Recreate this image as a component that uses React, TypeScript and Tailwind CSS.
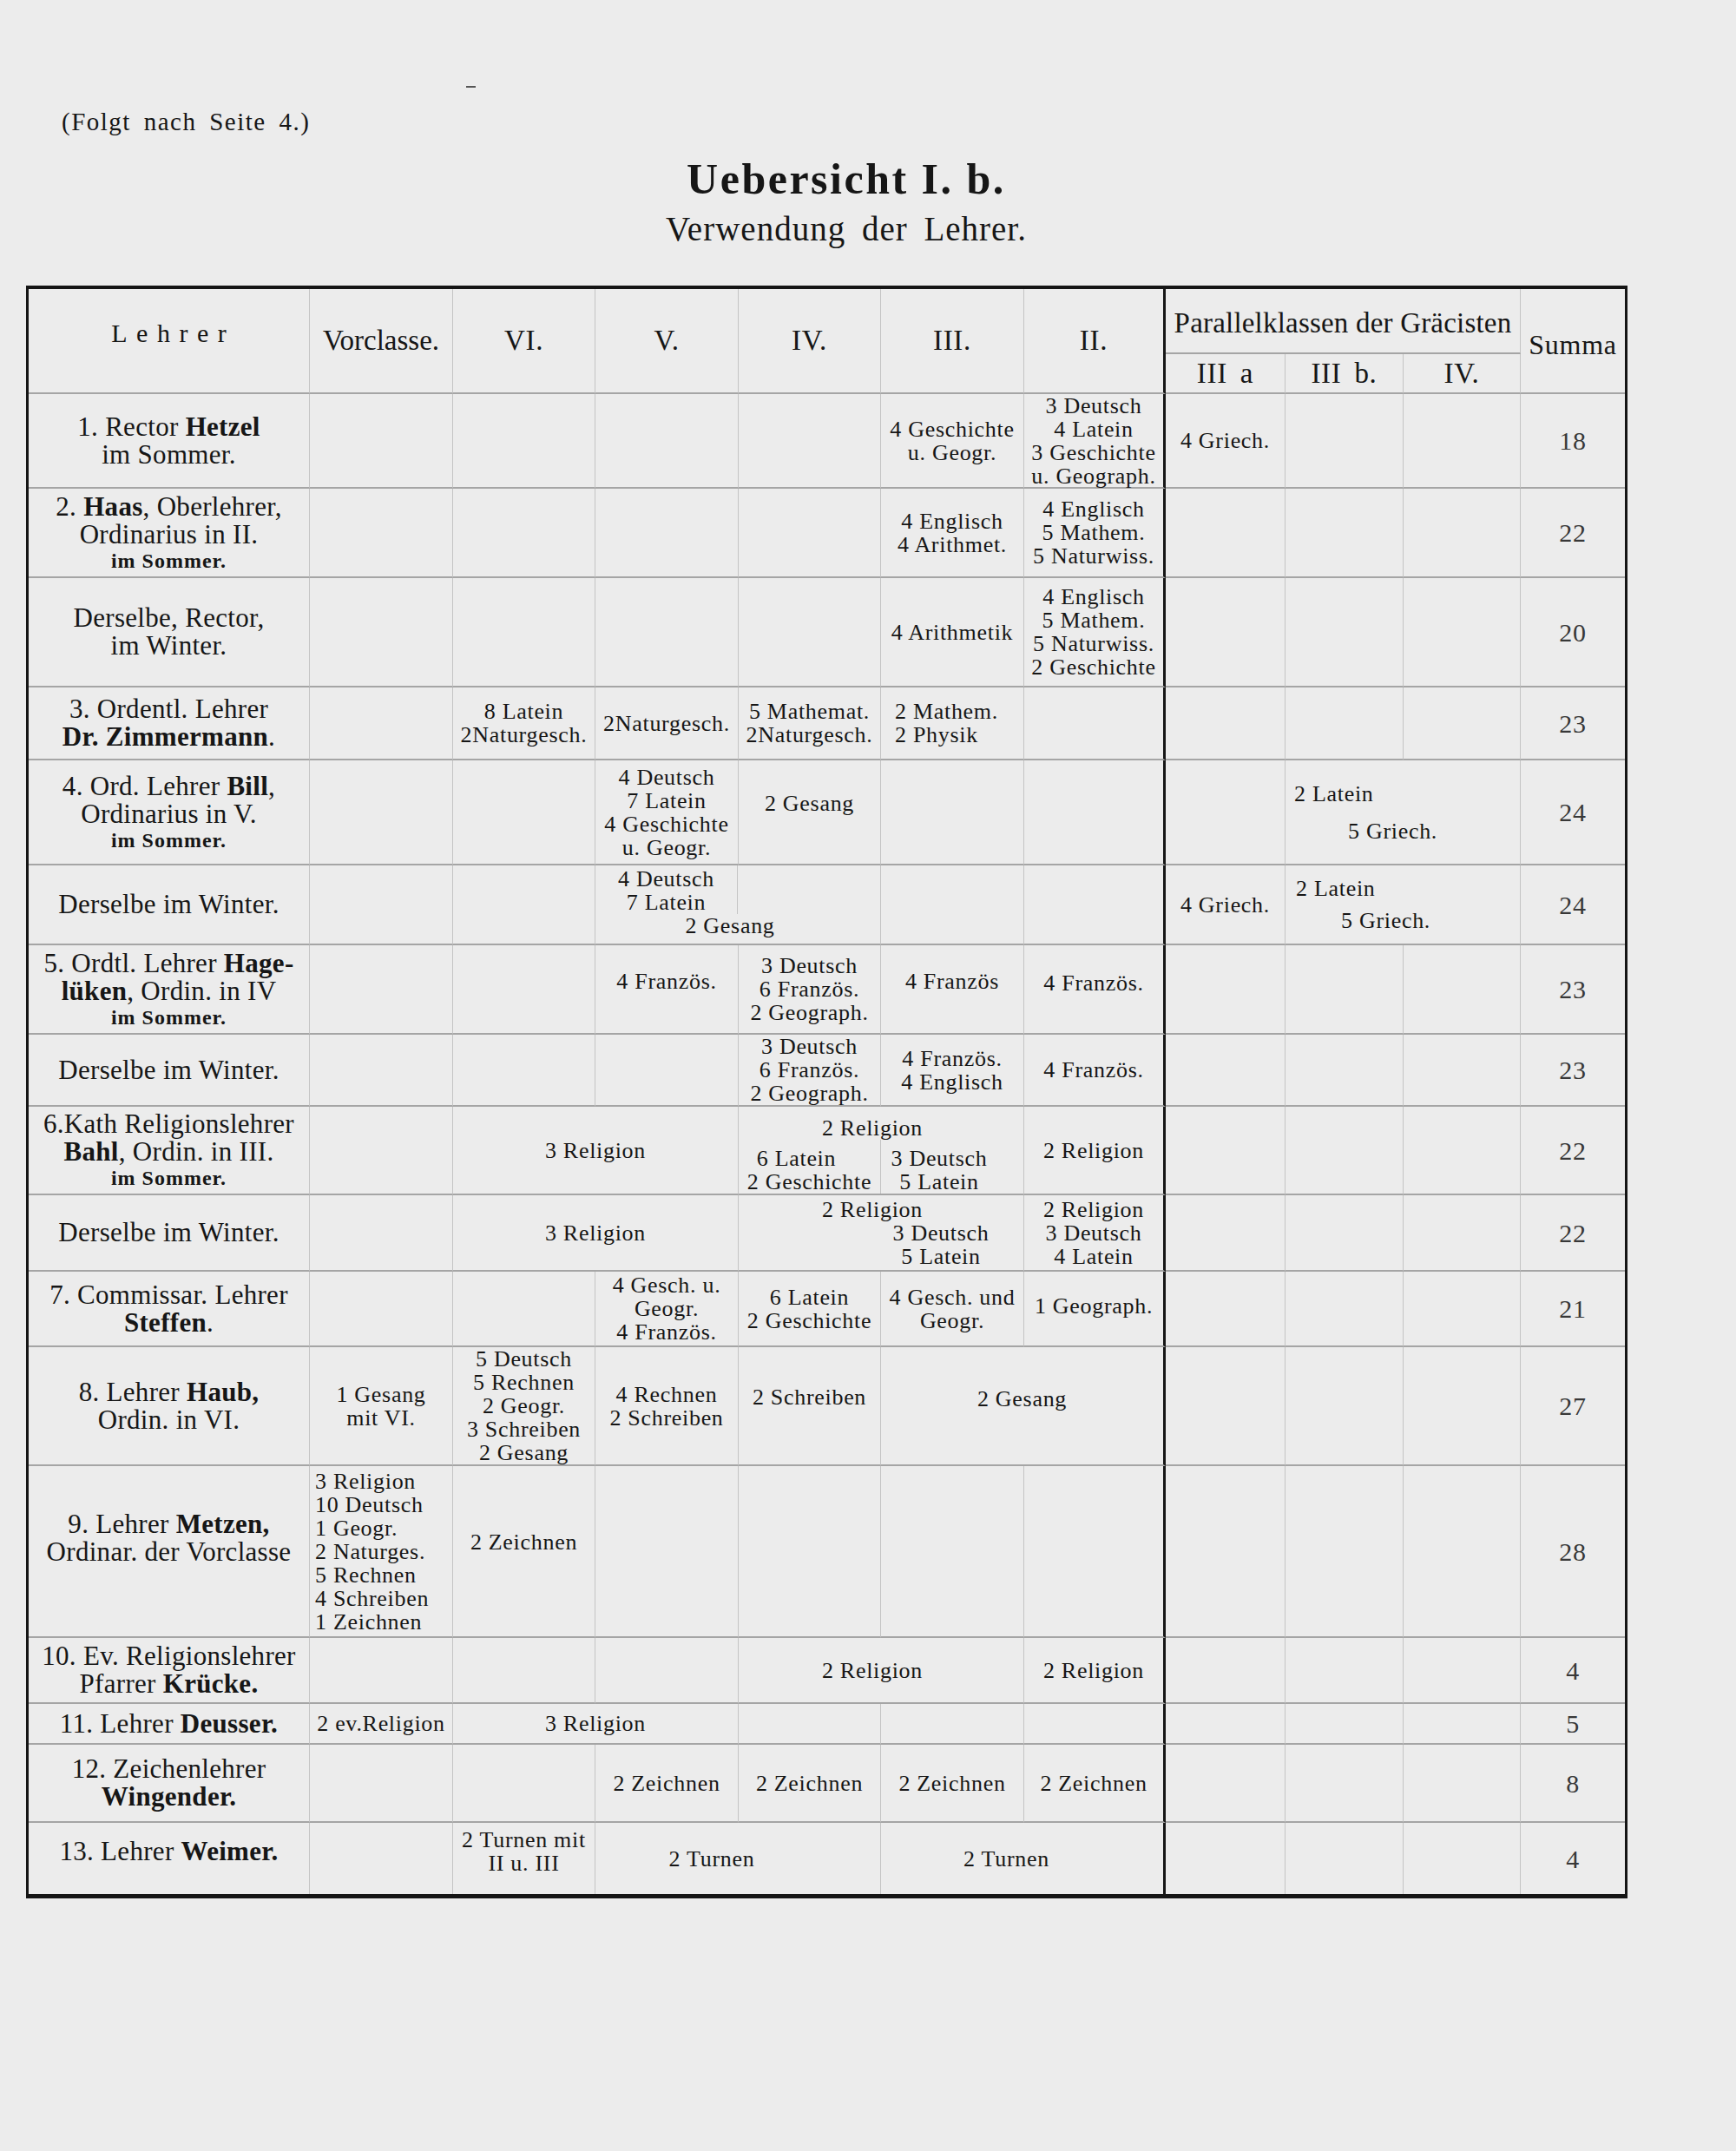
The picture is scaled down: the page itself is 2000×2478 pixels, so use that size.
import React from 'react';

const SPAN: Record<number, string> = { 1: '', 2: 'col-span-2', 3: 'col-span-3' };

type CP = {
  span?: number;
  rs?: boolean;
  right?: 'thin' | 'thick' | 'none';
  last?: boolean;
  className?: string;
  lines?: string[];
  children?: React.ReactNode;
};

function C({ span = 1, rs = false, right = 'thin', last = false, className = '', lines, children }: CP) {
  const r =
    right === 'thick'
      ? 'border-r-[3px] border-r-[#161616]'
      : right === 'none'
      ? ''
      : 'border-r border-r-[#c4c4c4]';
  const b = last ? '' : 'border-b-2 border-b-[#a5a5a5]';
  return (
    <div
      className={`${SPAN[span]} ${rs ? 'row-span-2' : ''} ${r} ${b} flex flex-col items-center justify-center text-center min-w-0 ${className}`}
    >
      {lines
        ? lines.map((s, i) => (
            <div key={i} className="whitespace-nowrap">
              {s}
            </div>
          ))
        : children}
    </div>
  );
}

function L({ children, last = false }: { children: React.ReactNode; last?: boolean }) {
  return (
    <C last={last} className="text-[31px] leading-[32px] px-[2px] tracking-[0.3px]">
      {children}
    </C>
  );
}

function Small({ children }: { children: React.ReactNode }) {
  return <div className="text-[24px] leading-[28px] font-bold tracking-[1px] whitespace-nowrap">{children}</div>;
}

function Ln({ children, className = '' }: { children: React.ReactNode; className?: string }) {
  return <div className={`whitespace-nowrap ${className}`}>{children}</div>;
}

function S({ v, last = false }: { v: string; last?: boolean }) {
  return (
    <C right="none" last={last} className="text-[30px] text-[#383838]">
      {v}
    </C>
  );
}

function E({ n = 1, thick = false, last = false }: { n?: number; thick?: boolean; last?: boolean }) {
  const arr = Array.from({ length: n });
  return (
    <>
      {arr.map((_, i) => (
        <C key={i} right={thick && i === n - 1 ? 'thick' : 'thin'} last={last} />
      ))}
    </>
  );
}

export default function App() {
  return (
    <div className="w-[2000px] h-[2478px] bg-[#ececec] text-[#161616] font-['Liberation_Serif',serif] overflow-hidden">
      <div className="ml-[537px] pt-[99px]">
        <div className="w-[11px] h-[2px] bg-[#555]" />
      </div>
      <div className="mt-[25px] ml-[71px] text-[29px] leading-[29px] tracking-[1.5px] [word-spacing:6px] whitespace-nowrap">
        (Folgt nach Seite 4.)
      </div>
      <div className="mt-[26px] pr-[50px] text-center text-[50px] leading-[50px] font-bold tracking-[2.5px]">
        Uebersicht I. b.
      </div>
      <div className="mt-[13px] pr-[50px] text-center text-[39px] leading-[39px] tracking-[1px] [word-spacing:8px]">
        Verwendung der Lehrer.
      </div>

      <div className="mt-[46px] ml-[30px] w-[1845px] border-t-4 border-l-[3px] border-r-[3px] border-b-[5px] border-[#151515]">
        <div className="grid grid-cols-[324px_165px_164px_165px_164px_165px_163px_138px_136px_135px_120px] grid-rows-[75px_46px_109px_103px_126px_84px_121px_92px_103px_83px_102px_88px_87px_137px_198px_76px_47px_90px_82px] text-[26px] leading-[27px] tracking-[0.7px]">
          {/* Header */}
          <C rs className="text-[30px] leading-[30px] pb-[18px] tracking-[0.35em] pl-[0.35em]">
            Lehrer
          </C>
          <C rs className="text-[33px] leading-[33px] tracking-[0px]">Vorclasse.</C>
          <C rs className="text-[33px] leading-[33px]">VI.</C>
          <C rs className="text-[33px] leading-[33px]">V.</C>
          <C rs className="text-[33px] leading-[33px]">IV.</C>
          <C rs className="text-[33px] leading-[33px]">III.</C>
          <C rs right="thick" className="text-[33px] leading-[33px]">II.</C>
          <C span={3} className="text-[33px] leading-[33px] tracking-[0.2px] pt-[6px]">
            <Ln>Parallelklassen der Gräcisten</Ln>
          </C>
          <C rs right="none" className="text-[32px] leading-[32px] pt-[8px]">Summa</C>
          <C className="text-[33px] leading-[33px] [word-spacing:6px]">III a</C>
          <C className="text-[33px] leading-[33px] [word-spacing:6px]">III b.</C>
          <C className="text-[33px] leading-[33px]">IV.</C>

          {/* Row 1 */}
          <L>
            <Ln>
              1. Rector <b className="font-bold">Hetzel</b>
            </Ln>
            <Ln>im Sommer.</Ln>
          </L>
          <E n={4} />
          <C lines={['4 Geschichte', 'u. Geogr.']} />
          <C right="thick" lines={['3 Deutsch', '4 Latein', '3 Geschichte', 'u. Geograph.']} />
          <C lines={['4 Griech.']} />
          <E n={2} />
          <S v="18" />

          {/* Row 2 */}
          <L>
            <Ln>
              2. <b className="font-bold">Haas</b>, Oberlehrer,
            </Ln>
            <Ln>Ordinarius in II.</Ln>
            <Small>im Sommer.</Small>
          </L>
          <E n={4} />
          <C lines={['4 Englisch', '4 Arithmet.']} />
          <C right="thick" lines={['4 Englisch', '5 Mathem.', '5 Naturwiss.']} />
          <E n={3} />
          <S v="22" />

          {/* Row 3 */}
          <L>
            <Ln>Derselbe, Rector,</Ln>
            <Ln>im Winter.</Ln>
          </L>
          <E n={4} />
          <C lines={['4 Arithmetik']} />
          <C right="thick" lines={['4 Englisch', '5 Mathem.', '5 Naturwiss.', '2 Geschichte']} />
          <E n={3} />
          <S v="20" />

          {/* Row 4 */}
          <L>
            <Ln>3. Ordentl. Lehrer</Ln>
            <Ln>
              <b className="font-bold">Dr. Zimmermann</b>.
            </Ln>
          </L>
          <E n={1} />
          <C lines={['8 Latein', '2Naturgesch.']} />
          <C lines={['2Naturgesch.']} />
          <C lines={['5 Mathemat.', '2Naturgesch.']} />
          <C className="items-start pl-[16px]" lines={['2 Mathem.', '2 Physik']} />
          <C right="thick" />
          <E n={3} />
          <S v="23" />

          {/* Row 5 */}
          <L>
            <Ln>
              4. Ord. Lehrer <b className="font-bold">Bill</b>,
            </Ln>
            <Ln>Ordinarius in V.</Ln>
            <Small>im Sommer.</Small>
          </L>
          <E n={2} />
          <C lines={['4 Deutsch', '7 Latein', '4 Geschichte', 'u. Geogr.']} />
          <C className="pb-[20px]" lines={['2 Gesang']} />
          <C />
          <C right="thick" />
          <C />
          <C span={2} className="items-start">
            <Ln className="pl-[10px]">2 Latein</Ln>
            <Ln className="pl-[72px] mt-[16px]">5 Griech.</Ln>
          </C>
          <S v="24" />

          {/* Row 6 */}
          <L>
            <Ln>Derselbe im Winter.</Ln>
          </L>
          <E n={2} />
          <C span={2} className="justify-start">
            <div className="self-stretch flex-1 grid grid-cols-2">
              <div className="border-r border-r-[#c4c4c4] flex flex-col justify-end items-center">
                <Ln>4 Deutsch</Ln>
                <Ln>7 Latein</Ln>
              </div>
              <div />
            </div>
            <Ln className="pb-[7px] pr-[18px]">2 Gesang</Ln>
          </C>
          <C />
          <C right="thick" />
          <C lines={['4 Griech.']} />
          <C span={2} className="items-start">
            <Ln className="pl-[12px]">2 Latein</Ln>
            <Ln className="pl-[64px] mt-[10px]">5 Griech.</Ln>
          </C>
          <S v="24" />

          {/* Row 7 */}
          <L>
            <Ln>
              5. Ordtl. Lehrer <b className="font-bold">Hage-</b>
            </Ln>
            <Ln>
              <b className="font-bold">lüken</b>, Ordin. in IV
            </Ln>
            <Small>im Sommer.</Small>
          </L>
          <E n={2} />
          <C className="pb-[18px]" lines={['4 Französ.']} />
          <C lines={['3 Deutsch', '6 Französ.', '2 Geograph.']} />
          <C className="pb-[18px]" lines={['4 Französ']} />
          <C right="thick" className="pb-[14px]" lines={['4 Französ.']} />
          <E n={3} />
          <S v="23" />

          {/* Row 8 */}
          <L>
            <Ln>Derselbe im Winter.</Ln>
          </L>
          <E n={3} />
          <C lines={['3 Deutsch', '6 Französ.', '2 Geograph.']} />
          <C lines={['4 Französ.', '4 Englisch']} />
          <C right="thick" lines={['4 Französ.']} />
          <E n={3} />
          <S v="23" />

          {/* Row 9 */}
          <L>
            <Ln>6.Kath Religionslehrer</Ln>
            <Ln>
              <b className="font-bold">Bahl</b>, Ordin. in III.
            </Ln>
            <Small>im Sommer.</Small>
          </L>
          <E n={1} />
          <C span={2} lines={['3 Religion']} />
          <C span={2} className="justify-start">
            <Ln className="pt-[11px] pr-[20px]">2 Religion</Ln>
            <div className="self-stretch flex-1 grid grid-cols-2">
              <div className="border-r border-r-[#c4c4c4] flex flex-col justify-end items-center">
                <Ln className="pr-[30px]">6 Latein</Ln>
                <Ln>2 Geschichte</Ln>
              </div>
              <div className="flex flex-col justify-end items-center pr-[30px]">
                <Ln>3 Deutsch</Ln>
                <Ln>5 Latein</Ln>
              </div>
            </div>
          </C>
          <C right="thick" lines={['2 Religion']} />
          <E n={3} />
          <S v="22" />

          {/* Row 10 */}
          <L>
            <Ln>Derselbe im Winter.</Ln>
          </L>
          <E n={1} />
          <C span={2} lines={['3 Religion']} />
          <C span={2}>
            <Ln className="pr-[20px]">2 Religion</Ln>
            <div className="self-stretch grid grid-cols-2">
              <div />
              <div className="flex flex-col items-center pr-[26px]">
                <Ln>3 Deutsch</Ln>
                <Ln>5 Latein</Ln>
              </div>
            </div>
          </C>
          <C right="thick" lines={['2 Religion', '3 Deutsch', '4 Latein']} />
          <E n={3} />
          <S v="22" />

          {/* Row 11 */}
          <L>
            <Ln>7. Commissar. Lehrer</Ln>
            <Ln>
              <b className="font-bold">Steffen</b>.
            </Ln>
          </L>
          <E n={2} />
          <C lines={['4 Gesch. u.', 'Geogr.', '4 Französ.']} />
          <C lines={['6 Latein', '2 Geschichte']} />
          <C lines={['4 Gesch. und', 'Geogr.']} />
          <C right="thick" className="pb-[6px]" lines={['1 Geograph.']} />
          <E n={3} />
          <S v="21" />

          {/* Row 12 */}
          <L>
            <Ln>
              8. Lehrer <b className="font-bold">Haub,</b>
            </Ln>
            <Ln>Ordin. in VI.</Ln>
          </L>
          <C lines={['1 Gesang', 'mit VI.']} />
          <C lines={['5 Deutsch', '5 Rechnen', '2 Geogr.', '3 Schreiben', '2 Gesang']} />
          <C lines={['4 Rechnen', '2 Schreiben']} />
          <C className="pb-[20px]" lines={['2 Schreiben']} />
          <C span={2} right="thick" className="pb-[16px]" lines={['2 Gesang']} />
          <E n={3} />
          <S v="27" />

          {/* Row 13 */}
          <L>
            <div className="pb-[30px]">
              <Ln>
                9. Lehrer <b className="font-bold">Metzen,</b>
              </Ln>
              <Ln>Ordinar. der Vorclasse</Ln>
            </div>
          </L>
          <C
            className="items-start pl-[6px]"
            lines={['3 Religion', '10 Deutsch', '1 Geogr.', '2 Naturges.', '5 Rechnen', '4 Schreiben', '1 Zeichnen']}
          />
          <C className="pb-[22px]" lines={['2 Zeichnen']} />
          <E n={3} />
          <C right="thick" />
          <E n={3} />
          <S v="28" />

          {/* Row 14 */}
          <L>
            <Ln>10. Ev. Religionslehrer</Ln>
            <Ln>
              Pfarrer <b className="font-bold">Krücke.</b>
            </Ln>
          </L>
          <E n={3} />
          <C span={2} className="pr-[20px]" lines={['2 Religion']} />
          <C right="thick" lines={['2 Religion']} />
          <E n={3} />
          <S v="4" />

          {/* Row 15 */}
          <L>
            <Ln>
              11. Lehrer <b className="font-bold">Deusser.</b>
            </Ln>
          </L>
          <C lines={['2 ev.Religion']} />
          <C span={2} lines={['3 Religion']} />
          <E n={2} />
          <C right="thick" />
          <E n={3} />
          <S v="5" />

          {/* Row 16 */}
          <L>
            <Ln>12. Zeichenlehrer</Ln>
            <Ln>
              <b className="font-bold">Wingender.</b>
            </Ln>
          </L>
          <E n={2} />
          <C lines={['2 Zeichnen']} />
          <C lines={['2 Zeichnen']} />
          <C lines={['2 Zeichnen']} />
          <C right="thick" lines={['2 Zeichnen']} />
          <E n={3} />
          <S v="8" />

          {/* Row 17 */}
          <L last>
            <div className="pb-[16px]">
              <Ln>
                13. Lehrer <b className="font-bold">Weimer.</b>
              </Ln>
            </div>
          </L>
          <C last />
          <C last className="pb-[16px]" lines={['2 Turnen mit', 'II u. III']} />
          <C last span={2} className="pr-[60px]" lines={['2 Turnen']} />
          <C last span={2} right="thick" className="pr-[36px]" lines={['2 Turnen']} />
          <E n={3} last />
          <S v="4" last />
        </div>
      </div>
    </div>
  );
}
